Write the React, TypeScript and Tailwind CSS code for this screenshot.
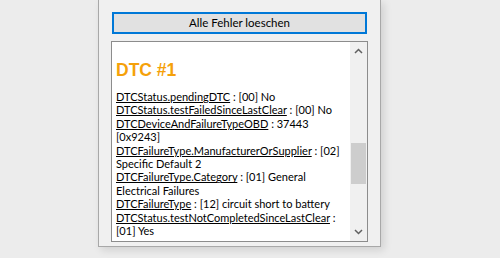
import React from 'react';

const lines: { key?: string; text: string }[][] = [
  [{ key: 'DTCStatus.pendingDTC', text: ' : [00] No' }],
  [{ key: 'DTCStatus.testFailedSinceLastClear', text: ' : [00] No' }],
  [{ key: 'DTCDeviceAndFailureTypeOBD', text: ' : 37443' }],
  [{ text: '[0x9243]' }],
  [{ key: 'DTCFailureType.ManufacturerOrSupplier', text: ' : [02]' }],
  [{ text: 'Specific Default 2' }],
  [{ key: 'DTCFailureType.Category', text: ' : [01] General' }],
  [{ text: 'Electrical Failures' }],
  [{ key: 'DTCFailureType', text: ' : [12] circuit short to battery' }],
  [{ key: 'DTCStatus.testNotCompletedSinceLastClear', text: ' :' }],
  [{ text: '[01] Yes' }],
];

export default function App() {
  return (
    <div
      className="w-[500px] h-[258px] bg-[#ececec] overflow-hidden flex"
      style={{ fontFamily: 'Lato, "Open Sans", sans-serif' }}
    >
      <div className="ml-[98px] w-[283px] h-[247px] bg-[#f0f0f0] border border-t-0 border-[#a8a8a8] shadow-[3px_3px_8px_rgba(0,0,0,0.12)] px-[12px] pt-[12px] flex flex-col">
        <button className="mx-[1px] h-[22px] border-2 border-[#0078d7] bg-[#e1e1e1] text-[11.5px] leading-none text-black">
          Alle Fehler loeschen
        </button>
        <div className="mt-[7px] h-[201px] border border-[#8c8c8c] bg-white flex">
          <div className="flex-1 pl-[4px] pt-[18px] text-[11px] leading-[13.4px] text-black overflow-hidden">
            <div className="text-[17.5px] leading-[20px] font-bold text-[#f5a10a] mb-[10px]" style={{ fontFamily: '"Liberation Sans", Arial, sans-serif' }}>
              DTC #1
            </div>
            {lines.map((ln, i) => (
              <div key={i} className="whitespace-nowrap">
                {ln.map((p, j) => (
                  <React.Fragment key={j}>
                    {p.key && <span className="underline underline-offset-[1px]">{p.key}</span>}
                    <span>{p.text}</span>
                  </React.Fragment>
                ))}
              </div>
            ))}
          </div>
          <div className="w-[17px] bg-[#f0f0f0] flex flex-col items-center">
            <svg width="17" height="17" viewBox="0 0 17 17" className="mt-[1px]">
              <path d="M5 10 L8.5 6.5 L12 10" stroke="#606060" strokeWidth="1.5" fill="none" />
            </svg>
            <div className="h-[83px]" />
            <div className="w-[15px] h-[41px] bg-[#cdcdcd]" />
            <div className="flex-1" />
            <svg width="17" height="17" viewBox="0 0 17 17" className="mb-[1px]">
              <path d="M5 7 L8.5 10.5 L12 7" stroke="#606060" strokeWidth="1.5" fill="none" />
            </svg>
          </div>
        </div>
      </div>
    </div>
  );
}
